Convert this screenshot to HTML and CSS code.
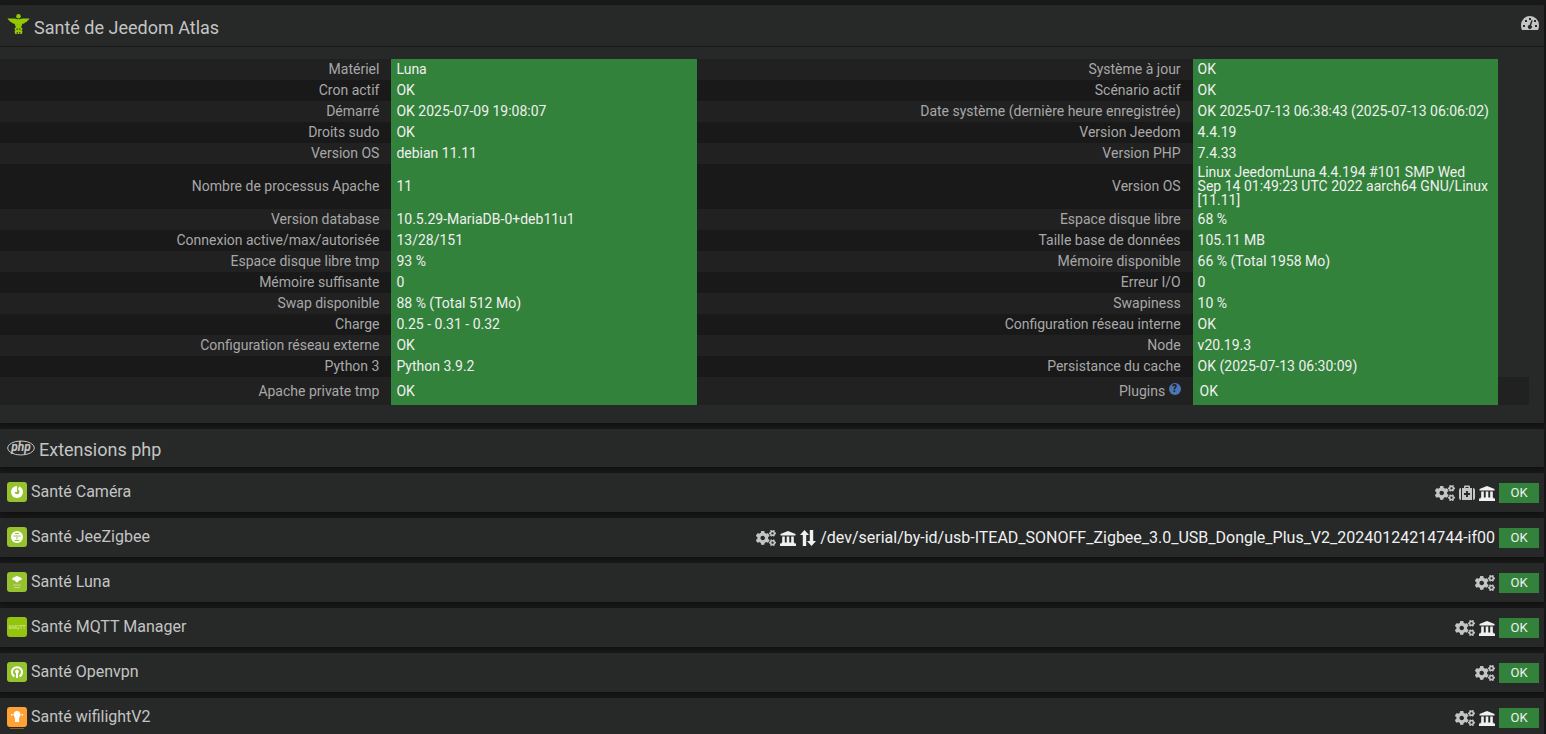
FILE: index.html
```html
<!DOCTYPE html>
<html lang="fr">
<head>
  <meta charset="UTF-8" />
  <meta name="viewport" content="width=device-width, initial-scale=1.0" />
  <title>Santé de Jeedom Atlas</title>
  <link rel="stylesheet" href="styles.css">
</head>
<body>
  <!-- Shared icons -->
  <svg class="sprite" aria-hidden="true">
    <symbol id="i-cogs" viewBox="0 0 640 512">
      <path id="small-gear" d="M512.1 191l-8.2 14.3c-3 5.3-9.4 7.5-15.1 5.4-11.8-4.4-22.6-10.7-32.1-18.6-4.6-3.8-5.8-10.5-2.8-15.7l8.2-14.3c-6.9-8-12.3-17.3-15.9-27.4h-16.5c-6 0-11.2-4.3-12.2-10.3-2-12-2.1-24.6 0-37.1 1-6 6.2-10.4 12.2-10.4h16.5c3.6-10.1 9-19.4 15.9-27.4l-8.2-14.3c-3-5.2-1.9-11.9 2.8-15.7 9.5-7.9 20.4-14.2 32.1-18.6 5.7-2.1 12.1.1 15.1 5.4l8.2 14.3c10.5-1.9 21.2-1.9 31.7 0L552 6.3c3-5.3 9.4-7.5 15.1-5.4 11.8 4.4 22.6 10.7 32.1 18.6 4.6 3.8 5.8 10.5 2.8 15.7l-8.2 14.3c6.9 8 12.3 17.3 15.9 27.4h16.5c6 0 11.2 4.3 12.2 10.3 2 12 2.1 24.6 0 37.1-1 6-6.2 10.4-12.2 10.4h-16.5c-3.6 10.1-9 19.4-15.9 27.4l8.2 14.3c3 5.2 1.9 11.9-2.8 15.7-9.5 7.9-20.4 14.2-32.1 18.6-5.7 2.1-12.1-.1-15.1-5.4l-8.2-14.3c-10.4 1.9-21.2 1.9-31.7 0zm-10.5-58.8c38.5 29.6 82.4-14.3 52.8-52.8-38.5-29.7-82.4 14.3-52.8 52.8z"/>
      <use href="#small-gear" transform="translate(0 300)"/>
      <path d="M386.3 286.1l33.7 16.8c10.1 5.8 14.5 18.1 10.5 29.1-8.9 24.2-26.4 46.4-42.6 65.8-7.4 8.9-20.2 11.1-30.3 5.3l-29.1-16.8c-16 13.7-34.6 24.6-54.9 31.7v33.6c0 11.6-8.3 21.6-19.7 23.6-24.6 4.2-50.4 4.4-75.9 0-11.5-2-20-11.9-20-23.6V418c-20.3-7.2-38.9-18-54.9-31.7L74 403c-10 5.8-22.9 3.6-30.3-5.3-16.2-19.4-33.3-41.6-42.2-65.7-4-10.9.4-23.2 10.5-29.1l33.3-16.8c-3.9-20.9-3.9-42.4 0-63.4L12 205.8c-10.1-5.8-14.6-18.1-10.5-29 8.9-24.2 26-46.4 42.2-65.8 7.4-8.9 20.2-11.1 30.3-5.3l29.1 16.8c16-13.7 34.6-24.6 54.9-31.7V57.1c0-11.5 8.2-21.5 19.6-23.5 24.6-4.2 50.5-4.4 76-.1 11.5 2 20 11.9 20 23.6v33.6c20.3 7.2 38.9 18 54.9 31.7l29.1-16.8c10-5.8 22.9-3.6 30.3 5.3 16.2 19.4 33.2 41.6 42.1 65.8 4 10.9.1 23.2-10 29.1l-33.7 16.8c3.9 21 3.9 42.5 0 63.5zm-117.6 21.1c59.2-77-28.7-164.9-105.7-105.7-59.2 77 28.7 164.9 105.7 105.7z"/>
    </symbol>
    <symbol id="i-market" viewBox="0 0 16 16">
      <path d="M8 1l7.500 3v1.500H.5V4zM2.200 6.500h2.600V13H2.200zM6.700 6.500h2.600V13H6.700zM11.200 6.500h2.600V13h-2.600zM1.500 12.500h13V13.500H16V16H0v-2.500h1.500z"/>
    </symbol>
    <symbol id="i-medkit" viewBox="0 0 16 16">
      <path fill-rule="evenodd" d="M5 3V1.500Q5 .5 6 .5h4q1 0 1 1V3h2v12H3V3zm1.500 0h3V2h-3zM7 6v2H5v2h2v2h2v-2h2V8H9V6zM2 3v12Q0 15 0 13V5Q0 3 2 3zM14 3q2 0 2 2v8q0 2-2 2z"/>
    </symbol>
    <symbol id="i-port" viewBox="0 0 16 16">
      <path d="M4.500 0L9 5H6.200v11H2.800V5H0zM11.500 16L7 11h2.800V0h3.400v11H16z"/>
    </symbol>
    <symbol id="i-gauge" viewBox="0 0 18 14">
      <path fill-rule="evenodd" d="M9 0a9 9 0 0 1 9 9q0 3-1 5H1Q0 12 0 9a9 9 0 0 1 9-9zM8 2v2h2V2zM4 4v2h2V4zM13 4v2h2V4zM2 9v2h2V9zM14 9v2h2V9zM10.500 4L8.600 9a2 2 0 1 0 1.500.4L11.700 4.500z"/>
    </symbol>
  </svg>

  <section class="panel">
    <header class="panel-heading main-heading">
      <h1 class="title">
        <svg class="caduceus" viewBox="0 0 22 21" aria-hidden="true">
          <circle cx="11" cy="2.300" r="2.300"/>
          <path d="M0 4.500h6.500q2.500 0 3.500 1h2q1-1 3.500-1H22q-.5 1.500-2 2.200-.5 1.500-2.200 1.500-.8 1.600-2.800 1.600-1.500 1.200-4 1.200t-4-1.200q-2 0-2.800-1.600Q2.500 8.200 2 6.700.5 6 0 4.500z"/>
          <path class="snake" d="M11 5v15M8.500 9.500q-1 2.500 2.500 3.500t3 2.500-3 2M13.500 9.500q1 2.500-2.500 3.500t-3 2.500 3 2M7.500 17q1 1 1 3M14.500 17q-1 1-1 3"/>
        </svg>
        Santé de Jeedom Atlas
      </h1>
      <button type="button" class="gauge-button" aria-label="Diagnostic"><svg class="gauge"><use href="#i-gauge"/></svg></button>
    </header>
    <div class="panel-body">
      <table class="health">
        <colgroup>
          <col class="col-label"><col class="col-value"><col class="col-label-wide"><col class="col-value"><col>
        </colgroup>
        <tbody>
          <tr><th scope="row">Matériel</th><td class="ok">Luna</td><th scope="row">Système à jour</th><td class="ok">OK</td></tr>
          <tr><th scope="row">Cron actif</th><td class="ok">OK</td><th scope="row">Scénario actif</th><td class="ok">OK</td></tr>
          <tr><th scope="row">Démarré</th><td class="ok">OK 2025-07-09 19:08:07</td><th scope="row">Date système (dernière heure enregistrée)</th><td class="ok">OK 2025-07-13 06:38:43 (2025-07-13 06:06:02)</td></tr>
          <tr><th scope="row">Droits sudo</th><td class="ok">OK</td><th scope="row">Version Jeedom</th><td class="ok">4.4.19</td></tr>
          <tr><th scope="row">Version OS</th><td class="ok">debian 11.11</td><th scope="row">Version PHP</th><td class="ok">7.4.33</td></tr>
          <tr><th scope="row">Nombre de processus Apache</th><td class="ok">11</td><th scope="row">Version OS</th><td class="ok">Linux JeedomLuna 4.4.194 #101 SMP Wed Sep 14 01:49:23 UTC 2022 aarch64 GNU/Linux [11.11]</td></tr>
          <tr><th scope="row">Version database</th><td class="ok">10.5.29-MariaDB-0+deb11u1</td><th scope="row">Espace disque libre</th><td class="ok">68 %</td></tr>
          <tr><th scope="row">Connexion active/max/autorisée</th><td class="ok">13/28/151</td><th scope="row">Taille base de données</th><td class="ok">105.11 MB</td></tr>
          <tr><th scope="row">Espace disque libre tmp</th><td class="ok">93 %</td><th scope="row">Mémoire disponible</th><td class="ok">66 % (Total 1958 Mo)</td></tr>
          <tr><th scope="row">Mémoire suffisante</th><td class="ok">0</td><th scope="row">Erreur I/O</th><td class="ok">0</td></tr>
          <tr><th scope="row">Swap disponible</th><td class="ok">88 % (Total 512 Mo)</td><th scope="row">Swapiness</th><td class="ok">10 %</td></tr>
          <tr><th scope="row">Charge</th><td class="ok">0.25 - 0.31 - 0.32</td><th scope="row">Configuration réseau interne</th><td class="ok">OK</td></tr>
          <tr><th scope="row">Configuration réseau externe</th><td class="ok">OK</td><th scope="row">Node</th><td class="ok">v20.19.3</td></tr>
          <tr><th scope="row">Python 3</th><td class="ok">Python 3.9.2</td><th scope="row">Persistance du cache</th><td class="ok">OK (2025-07-13 06:30:09)</td></tr>
          <tr class="last"><th scope="row">Apache private tmp</th><td class="ok">OK</td><th scope="row">Plugins <sup class="help">?</sup></th><td class="ok"><span class="plugin-state">OK</span></td><td></td></tr>
        </tbody>
      </table>
    </div>
  </section>

  <section class="panel">
    <header class="panel-heading php-heading">
      <h2 class="title">
        <svg class="php" viewBox="0 0 28 16" aria-hidden="true">
          <ellipse cx="14" cy="8" rx="13.400" ry="7"/>
          <text x="14" y="11" text-anchor="middle">php</text>
        </svg>
        <a href="#php">Extensions php</a>
      </h2>
    </header>
  </section>

  <section class="panel">
    <header class="panel-heading">
      <h3 class="title">
        <svg class="plugin" viewBox="0 0 20 20" aria-hidden="true">
          <rect class="tile" width="20" height="20" rx="3"/>
          <circle class="white" cx="10" cy="10" r="6"/>
          <path class="tile" d="M10 4L8 3h4.500L11 7.500A2.500 2.500 0 1 1 7.500 10h2.500z"/>
        </svg>
        <a href="#camera">Santé Caméra</a>
      </h3>
      <div class="states">
        <svg class="cogs"><use href="#i-cogs"/></svg>
        <svg class="icon"><use href="#i-medkit"/></svg>
        <svg class="icon market"><use href="#i-market"/></svg>
        <span class="badge">OK</span>
      </div>
    </header>
  </section>

  <section class="panel">
    <header class="panel-heading">
      <h3 class="title">
        <svg class="plugin" viewBox="0 0 20 20" aria-hidden="true">
          <rect class="tile" width="20" height="20" rx="3"/>
          <circle class="white" cx="10" cy="10" r="6"/>
          <path class="lines" d="M8 6.500h4M6.500 9h2.500M11 9h2.500M10 8v4.500M7.500 13.500h5"/>
        </svg>
        <a href="#jeezigbee">Santé JeeZigbee</a>
      </h3>
      <div class="states">
        <svg class="cogs"><use href="#i-cogs"/></svg>
        <svg class="icon market"><use href="#i-market"/></svg>
        <svg class="icon market"><use href="#i-port"/></svg>
        <span class="port">/dev/serial/by-id/usb-ITEAD_SONOFF_Zigbee_3.0_USB_Dongle_Plus_V2_20240124214744-if00</span>
        <span class="badge">OK</span>
      </div>
    </header>
  </section>

  <section class="panel">
    <header class="panel-heading">
      <h3 class="title">
        <svg class="plugin" viewBox="0 0 20 20" aria-hidden="true">
          <rect class="tile" width="20" height="20" rx="3"/>
          <path class="white" d="M5 7q1-2 3-2 2-2 4 0 2 0 3 2-1 1.500-3 1.500Q11 10.500 10 10.500T8 8.500Q6 8.500 5 7z"/>
          <path class="faint" d="M6 13h8M7 15.500h6"/>
        </svg>
        <a href="#luna">Santé Luna</a>
      </h3>
      <div class="states">
        <svg class="cogs"><use href="#i-cogs"/></svg>
        <span class="badge">OK</span>
      </div>
    </header>
  </section>

  <section class="panel">
    <header class="panel-heading">
      <h3 class="title">
        <svg class="plugin" viewBox="0 0 20 20" aria-hidden="true">
          <rect class="tile mqtt" width="20" height="20" rx="3"/>
          <text class="tile-text" x="10" y="12" text-anchor="middle">&amp;MQTT</text>
        </svg>
        <a href="#mqtt">Santé MQTT Manager</a>
      </h3>
      <div class="states">
        <svg class="cogs"><use href="#i-cogs"/></svg>
        <svg class="icon market"><use href="#i-market"/></svg>
        <span class="badge">OK</span>
      </div>
    </header>
  </section>

  <section class="panel">
    <header class="panel-heading">
      <h3 class="title">
        <svg class="plugin" viewBox="0 0 20 20" aria-hidden="true">
          <rect class="tile" width="20" height="20" rx="3"/>
          <path class="ring" d="M7.500 14.500A5 5 0 1 1 12.500 14.500"/>
          <path class="white" d="M10 7.500a2 2 0 0 1 1 3.700V16H9v-4.800a2 2 0 0 1 1-3.700z"/>
        </svg>
        <a href="#openvpn">Santé Openvpn</a>
      </h3>
      <div class="states">
        <svg class="cogs"><use href="#i-cogs"/></svg>
        <span class="badge">OK</span>
      </div>
    </header>
  </section>

  <section class="panel">
    <header class="panel-heading">
      <h3 class="title">
        <svg class="plugin" viewBox="0 0 20 20" aria-hidden="true">
          <rect class="tile light" width="20" height="20" rx="3"/>
          <path class="white" d="M10 4a3.500 3.500 0 0 1 2.500 6Q12 10.500 12 15H8Q8 10.500 7.500 10A3.500 3.500 0 0 1 10 4zM4 7h1.500v1.500H4zM14.500 7H16v1.500h-1.500z"/>
          <path class="caption" d="M3 21.500h14"/>
        </svg>
        <a href="#wifilight">Santé wifilightV2</a>
      </h3>
      <div class="states">
        <svg class="cogs"><use href="#i-cogs"/></svg>
        <svg class="icon market"><use href="#i-market"/></svg>
        <span class="badge">OK</span>
      </div>
    </header>
  </section>
</body>
</html>
```
FILE: styles.css
```css
body {
  margin: 0;
  padding: 5px 2px 0 0;
  background-color: #191919;
  color: #c4c4c4;
  font-family: Roboto, "Open Sans", sans-serif;
  font-size: 14px;
}
.sprite {
  display: none;
}
svg {
  flex: none;
  fill: currentColor;
  overflow: visible;
}
.panel {
  margin-bottom: 6px;
  background-color: #272929;
  box-shadow: 0 2px 4px rgba(0, 0, 0, 0.4);
}
.panel-heading {
  display: flex;
  align-items: center;
  justify-content: space-between;
  box-sizing: border-box;
  height: 39px;
  padding: 0 5px 0 7px;
}
.main-heading {
  height: 42px;
  border-bottom: 1px solid #191919;
}
.php-heading {
  height: 38px;
}
.title {
  display: flex;
  align-items: center;
  gap: 4px;
  margin: 0;
  padding-bottom: 2px;
  font-size: 16px;
  line-height: 20px;
  font-weight: 400;
}
.title a {
  color: inherit;
  text-decoration: none;
}
.main-heading .title,
.php-heading .title {
  padding: 4px 0 0;
  font-size: 18px;
}
.caduceus {
  width: 23px;
  height: 21px;
  margin-bottom: 6px;
  color: #94ca02;
}
.snake {
  fill: none;
  stroke: currentColor;
  stroke-width: 1.8;
}
.gauge-button {
  display: flex;
  padding: 0 0 5px;
  border: none;
  background: none;
  color: #c4c4c4;
  cursor: pointer;
}
.gauge {
  width: 18px;
  height: 14px;
}

/* Health table */
.panel-body {
  padding: 12px 15px 18px 0;
}
.health {
  width: 100%;
  table-layout: fixed;
  border-collapse: collapse;
  line-height: 14px;
}
.col-label {
  width: 25.6%;
}
.col-label-wide {
  width: 32.4%;
}
.col-value {
  width: 20%;
}
.health tr:nth-child(odd) th,
.health tr:nth-child(odd) td {
  background-color: #212121;
}
.health tr:nth-child(even) th {
  background-color: #191919;
}
.health th {
  padding: 0 12px 1px 0;
  height: 20px;
  font-weight: 400;
  text-align: right;
  color: #a8a8a8;
}
.health td {
  padding: 1px 8px 2px 5px;
}
.health tr .ok.ok {
  background-color: #33823b;
  color: #f0f0f0;
}
.health .last th {
  height: 27px;
}
.plugin-state {
  padding-left: 2px;
}
.help {
  display: inline-block;
  width: 12px;
  height: 12px;
  border-radius: 50%;
  background-color: #4a76b5;
  color: #212121;
  font-size: 10px;
  font-weight: 900;
  line-height: 12px;
  text-align: center;
  vertical-align: 4px;
  margin-top: -4px;
}

/* Plugins */
.php {
  width: 28px;
  height: 16px;
  margin-bottom: 4px;
}
.php ellipse {
  fill: none;
  stroke: currentColor;
}
.php text {
  font-size: 12px;
  font-weight: 700;
  font-style: italic;
}
.plugin {
  width: 20px;
  height: 20px;
}
.tile {
  fill: #96c22e;
}
.mqtt {
  fill: #94c50e;
}
.light {
  fill: #ffa133;
}
.white {
  fill: #fff;
}
.ring {
  fill: none;
  stroke: #fff;
  stroke-width: 2;
}
.lines,
.faint,
.caption {
  fill: none;
  stroke: #96c22e;
}
.faint {
  stroke: #c3dd85;
}
.caption {
  stroke: #80602f;
}
.tile-text {
  fill: #dcecae;
  font-size: 5px;
}
.states {
  display: flex;
  align-items: center;
  gap: 4px;
}
.cogs {
  width: 20px;
  height: 16px;
}
.icon {
  width: 16px;
  height: 16px;
}
.market,
.port {
  color: #f0f0f0;
}
.port {
  font-size: 16px;
  line-height: 20px;
}
.badge {
  width: 40px;
  background-color: #33823b;
  color: #f0f0f0;
  font-size: 13px;
  line-height: 20px;
  text-align: center;
}
```
